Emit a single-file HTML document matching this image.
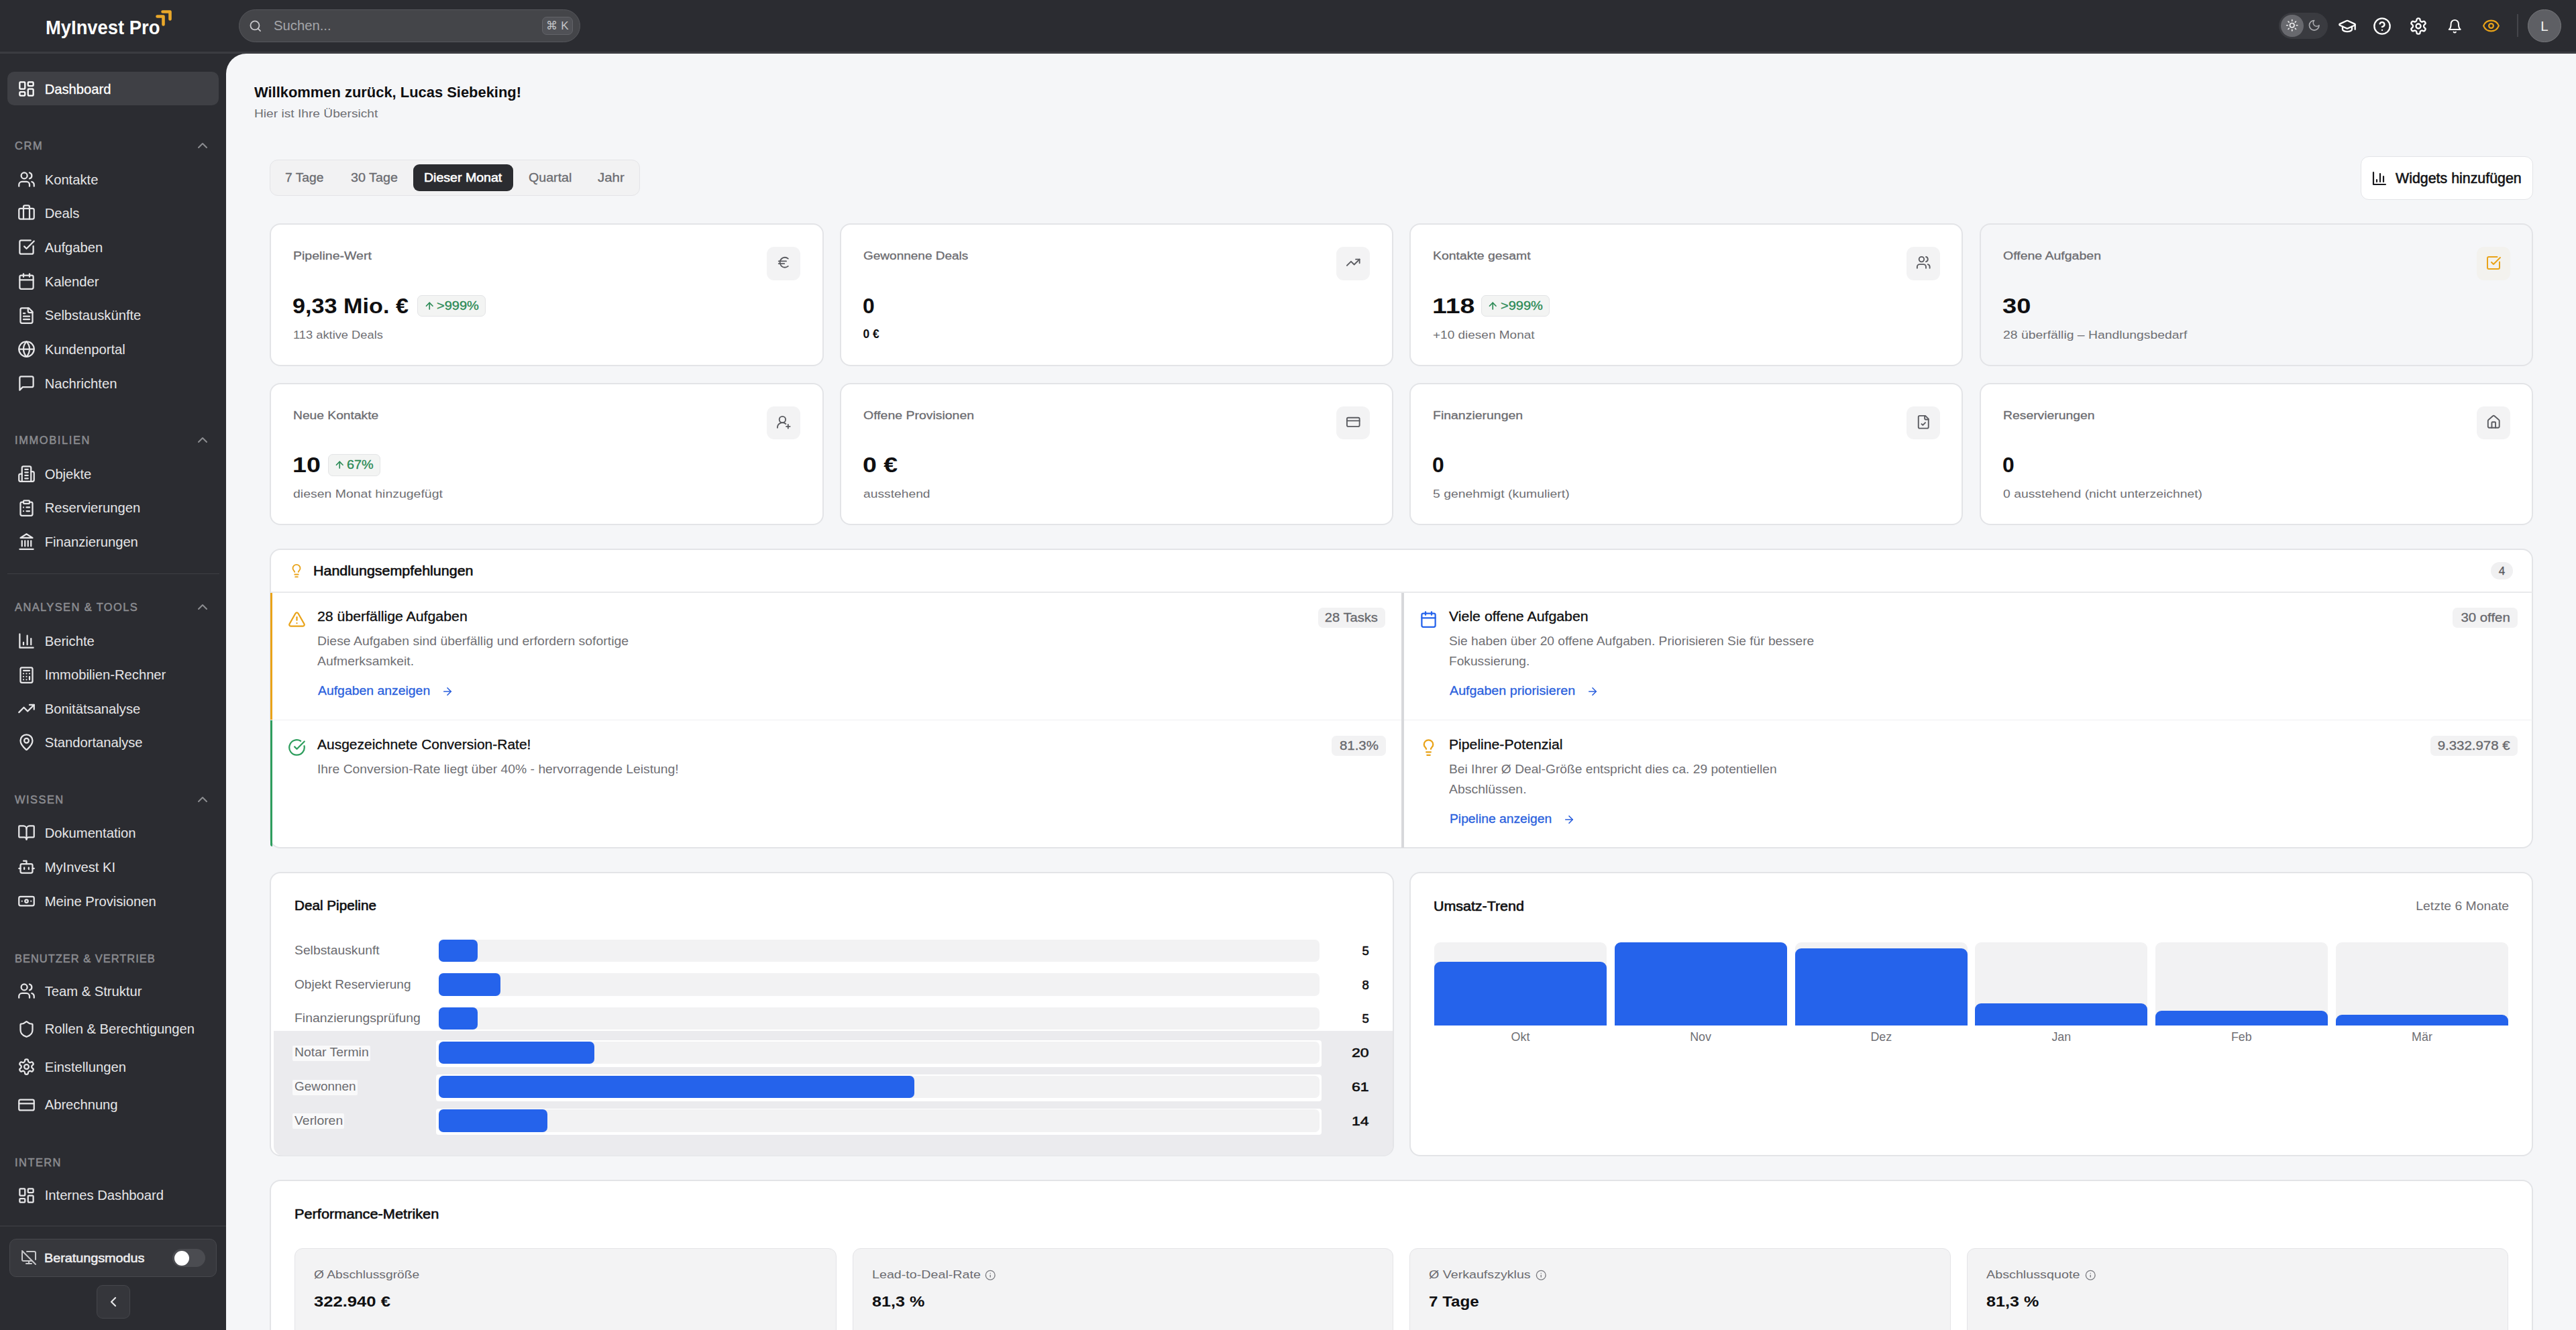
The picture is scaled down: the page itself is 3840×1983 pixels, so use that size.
<!DOCTYPE html>
<html><head><meta charset="utf-8"><title>MyInvest Pro Dashboard</title>
<style>
html,body{margin:0;padding:0;width:3840px;height:1983px;overflow:hidden;background:#2b2c31;}
body{position:relative;font-family:"Liberation Sans",sans-serif;}
div{box-sizing:border-box;}
</style></head><body>
<div style="position:absolute;left:0.00px;top:0.00px;width:3840.00px;height:1983.00px;background:#2b2c31;border-radius:0px;"></div>
<div style="position:absolute;left:0.00px;top:77.00px;width:3840.00px;height:2.50px;background:#3b3c41;border-radius:0px;"></div>
<div style="position:absolute;left:337px;top:80px;width:3503px;height:1903px;background:#f5f6f8;border-top-left-radius:30px"></div>
<div style="position:absolute;left:68.40px;top:25.92px;font-size:29.86px;line-height:29.86px;font-weight:700;color:#ffffff;letter-spacing:0.000px;white-space:nowrap;transform:scaleX(0.9170);transform-origin:0 0;">MyInvest Pro</div>
<svg style="position:absolute;left:232px;top:15px" width="25" height="24" viewBox="0 0 25 24"><path d="M2.5 9.5 H11.5 V21.5" fill="none" stroke="#eaa82a" stroke-width="4.6" stroke-linecap="round" stroke-linejoin="round"/><path d="M10.5 2.5 H21.5 V13.5" fill="none" stroke="#eaa82a" stroke-width="4.6" stroke-linecap="round" stroke-linejoin="round"/></svg>
<div style="position:absolute;left:355.70px;top:13.60px;width:509.30px;height:49.30px;background:#444549;border:1.5px solid #56575c;border-radius:25px;"></div>
<svg style="position:absolute;left:371.25px;top:29.25px;" width="19.5" height="19.5" viewBox="0 0 24 24" fill="none" stroke="#c9c9cc" stroke-width="2.2" stroke-linecap="round" stroke-linejoin="round"><circle cx="11" cy="11" r="8"/><path d="m21 21-4.3-4.3"/></svg>
<div style="position:absolute;left:407.99px;top:29.13px;font-size:19.57px;line-height:19.57px;font-weight:400;color:#a4a5a9;letter-spacing:0.000px;white-space:nowrap;transform:scaleX(1.0359);transform-origin:0 0;">Suchen...</div>
<div style="position:absolute;left:808.00px;top:25.00px;width:46.00px;height:27.40px;background:#505156;border:1.5px solid #626368;border-radius:7px;"></div>
<div style="position:absolute;left:814.47px;top:29.61px;font-size:17px;line-height:17px;font-weight:400;color:#c4c5c8;letter-spacing:0.000px;white-space:nowrap;">⌘ K</div>
<div style="position:absolute;left:3397.30px;top:18.80px;width:72.40px;height:39.40px;background:#3a3b40;border-radius:20px;"></div>
<div style="position:absolute;left:3400.00px;top:21.70px;width:34.00px;height:33.60px;background:#68696e;border-radius:17px;"></div>
<svg style="position:absolute;left:3406.95px;top:28.05px;" width="19.5" height="19.5" viewBox="0 0 24 24" fill="none" stroke="#f0f0f2" stroke-width="2" stroke-linecap="round" stroke-linejoin="round"><circle cx="12" cy="12" r="4"/><path d="M12 2v2"/><path d="M12 20v2"/><path d="m4.93 4.93 1.41 1.41"/><path d="m17.66 17.66 1.41 1.41"/><path d="M2 12h2"/><path d="M20 12h2"/><path d="m6.34 17.66-1.41 1.41"/><path d="m19.07 4.93-1.41 1.41"/></svg>
<svg style="position:absolute;left:3439.95px;top:28.05px;" width="19.5" height="19.5" viewBox="0 0 24 24" fill="none" stroke="#a9aaae" stroke-width="2" stroke-linecap="round" stroke-linejoin="round"><path d="M12 3a6 6 0 0 0 9 9 9 9 0 1 1-9-9Z"/></svg>
<svg style="position:absolute;left:3484.70px;top:24.50px;" width="28" height="28" viewBox="0 0 24 24" fill="none" stroke="#ffffff" stroke-width="2" stroke-linecap="round" stroke-linejoin="round"><path d="M21.42 10.922a1 1 0 0 0-.019-1.838L12.83 5.18a2 2 0 0 0-1.66 0L2.6 9.08a1 1 0 0 0 0 1.832l8.57 3.908a2 2 0 0 0 1.66 0z"/><path d="M22 10v6"/><path d="M6 12.5V16a6 3 0 0 0 12 0v-3.5"/></svg>
<svg style="position:absolute;left:3537.40px;top:24.50px;" width="28" height="28" viewBox="0 0 24 24" fill="none" stroke="#ffffff" stroke-width="2" stroke-linecap="round" stroke-linejoin="round"><circle cx="12" cy="12" r="10"/><path d="M9.09 9a3 3 0 0 1 5.83 1c0 2-3 3-3 3"/><path d="M12 17h.01"/></svg>
<svg style="position:absolute;left:3591.30px;top:24.50px;" width="28" height="28" viewBox="0 0 24 24" fill="none" stroke="#ffffff" stroke-width="2" stroke-linecap="round" stroke-linejoin="round"><path d="M12.22 2h-.44a2 2 0 0 0-2 2v.18a2 2 0 0 1-1 1.73l-.43.25a2 2 0 0 1-2 0l-.15-.08a2 2 0 0 0-2.73.73l-.22.38a2 2 0 0 0 .73 2.73l.15.1a2 2 0 0 1 1 1.72v.51a2 2 0 0 1-1 1.74l-.15.09a2 2 0 0 0-.73 2.73l.22.38a2 2 0 0 0 2.73.73l.15-.08a2 2 0 0 1 2 0l.43.25a2 2 0 0 1 1 1.73V20a2 2 0 0 0 2 2h.44a2 2 0 0 0 2-2v-.18a2 2 0 0 1 1-1.73l.43-.25a2 2 0 0 1 2 0l.15.08a2 2 0 0 0 2.73-.73l.22-.39a2 2 0 0 0-.73-2.73l-.15-.08a2 2 0 0 1-1-1.74v-.5a2 2 0 0 1 1-1.74l.15-.09a2 2 0 0 0 .73-2.73l-.22-.38a2 2 0 0 0-2.73-.73l-.15.08a2 2 0 0 1-2 0l-.43-.25a2 2 0 0 1-1-1.73V4a2 2 0 0 0-2-2z"/><circle cx="12" cy="12" r="3"/></svg>
<svg style="position:absolute;left:3647.75px;top:27.75px;" width="22.5" height="22.5" viewBox="0 0 24 24" fill="none" stroke="#ffffff" stroke-width="2.1" stroke-linecap="round" stroke-linejoin="round"><path d="M6 8a6 6 0 0 1 12 0c0 7 3 9 3 9H3s3-2 3-9"/><path d="M10.3 21a1.94 1.94 0 0 0 3.4 0"/></svg>
<svg style="position:absolute;left:3699.50px;top:25.00px;" width="27" height="27" viewBox="0 0 24 24" fill="none" stroke="#e9a319" stroke-width="2" stroke-linecap="round" stroke-linejoin="round"><path d="M2.062 12.348a1 1 0 0 1 0-.696 10.75 10.75 0 0 1 19.876 0 1 1 0 0 1 0 .696 10.75 10.75 0 0 1-19.876 0"/><circle cx="12" cy="12" r="3"/></svg>
<div style="position:absolute;left:3752.00px;top:21.40px;width:1.50px;height:33.90px;background:#45464b;border-radius:0px;"></div>
<div style="position:absolute;left:3768.00px;top:13.60px;width:50.00px;height:49.40px;background:#5e5f64;border:1.5px solid #77787c;border-radius:25px;"></div>
<div style="position:absolute;left:3787.28px;top:29.09px;font-size:20.57px;line-height:20.57px;font-weight:400;color:#f2f2f3;letter-spacing:0.000px;white-space:nowrap;">L</div>
<div style="position:absolute;left:11.00px;top:107.00px;width:315.00px;height:50.00px;background:#3f4045;border-radius:10px;"></div>
<svg style="position:absolute;left:25.50px;top:118.90px;" width="27" height="27" viewBox="0 0 24 24" fill="none" stroke="#ffffff" stroke-width="2" stroke-linecap="round" stroke-linejoin="round"><rect width="7" height="9" x="3" y="3" rx="1"/><rect width="7" height="5" x="14" y="3" rx="1"/><rect width="7" height="9" x="14" y="12" rx="1"/><rect width="7" height="5" x="3" y="16" rx="1"/></svg>
<div style="position:absolute;left:66.69px;top:122.69px;font-size:20.21px;line-height:20.21px;font-weight:400;color:#ffffff;letter-spacing:0.000px;white-space:nowrap;-webkit-text-stroke:0.3px #ffffff;">Dashboard</div>
<div style="position:absolute;left:22.04px;top:209.19px;font-size:16.43px;line-height:16.43px;font-weight:400;color:#8c8d91;letter-spacing:1.626px;white-space:nowrap;-webkit-text-stroke:0.5px #8c8d91;">CRM</div>
<svg style="position:absolute;left:289.50px;top:205.00px;" width="24" height="24" viewBox="0 0 24 24" fill="none" stroke="#8c8d91" stroke-width="2" stroke-linecap="round" stroke-linejoin="round"><path d="m18 15-6-6-6 6"/></svg>
<svg style="position:absolute;left:25.50px;top:253.75px;" width="27" height="27" viewBox="0 0 24 24" fill="none" stroke="#e6e6e8" stroke-width="2" stroke-linecap="round" stroke-linejoin="round"><path d="M16 21v-2a4 4 0 0 0-4-4H6a4 4 0 0 0-4 4v2"/><circle cx="9" cy="7" r="4"/><path d="M22 21v-2a4 4 0 0 0-3-3.87"/><path d="M16 3.13a4 4 0 0 1 0 7.75"/></svg>
<div style="position:absolute;left:66.69px;top:257.54px;font-size:20.21px;line-height:20.21px;font-weight:400;color:#e6e6e8;letter-spacing:0.000px;white-space:nowrap;">Kontakte</div>
<svg style="position:absolute;left:25.50px;top:304.47px;" width="27" height="27" viewBox="0 0 24 24" fill="none" stroke="#e6e6e8" stroke-width="2" stroke-linecap="round" stroke-linejoin="round"><path d="M16 20V4a2 2 0 0 0-2-2h-4a2 2 0 0 0-2 2v16"/><rect width="20" height="14" x="2" y="6" rx="2"/></svg>
<div style="position:absolute;left:66.69px;top:308.26px;font-size:20.21px;line-height:20.21px;font-weight:400;color:#e6e6e8;letter-spacing:0.000px;white-space:nowrap;">Deals</div>
<svg style="position:absolute;left:25.50px;top:355.19px;" width="27" height="27" viewBox="0 0 24 24" fill="none" stroke="#e6e6e8" stroke-width="2" stroke-linecap="round" stroke-linejoin="round"><path d="M21 10.5V19a2 2 0 0 1-2 2H5a2 2 0 0 1-2-2V5a2 2 0 0 1 2-2h12.5"/><path d="m9 11 3 3L22 4"/></svg>
<div style="position:absolute;left:66.69px;top:358.98px;font-size:20.21px;line-height:20.21px;font-weight:400;color:#e6e6e8;letter-spacing:0.000px;white-space:nowrap;">Aufgaben</div>
<svg style="position:absolute;left:25.50px;top:405.91px;" width="27" height="27" viewBox="0 0 24 24" fill="none" stroke="#e6e6e8" stroke-width="2" stroke-linecap="round" stroke-linejoin="round"><path d="M8 2v4"/><path d="M16 2v4"/><rect width="18" height="18" x="3" y="4" rx="2"/><path d="M3 10h18"/></svg>
<div style="position:absolute;left:66.69px;top:409.70px;font-size:20.21px;line-height:20.21px;font-weight:400;color:#e6e6e8;letter-spacing:0.000px;white-space:nowrap;">Kalender</div>
<svg style="position:absolute;left:25.50px;top:456.63px;" width="27" height="27" viewBox="0 0 24 24" fill="none" stroke="#e6e6e8" stroke-width="2" stroke-linecap="round" stroke-linejoin="round"><path d="M15 2H6a2 2 0 0 0-2 2v16a2 2 0 0 0 2 2h12a2 2 0 0 0 2-2V7Z"/><path d="M14 2v4a2 2 0 0 0 2 2h4"/><path d="M10 9H8"/><path d="M16 13H8"/><path d="M16 17H8"/></svg>
<div style="position:absolute;left:66.69px;top:460.42px;font-size:20.21px;line-height:20.21px;font-weight:400;color:#e6e6e8;letter-spacing:0.000px;white-space:nowrap;">Selbstauskünfte</div>
<svg style="position:absolute;left:25.50px;top:507.35px;" width="27" height="27" viewBox="0 0 24 24" fill="none" stroke="#e6e6e8" stroke-width="2" stroke-linecap="round" stroke-linejoin="round"><circle cx="12" cy="12" r="10"/><path d="M12 2a14.5 14.5 0 0 0 0 20 14.5 14.5 0 0 0 0-20"/><path d="M2 12h20"/></svg>
<div style="position:absolute;left:66.69px;top:511.14px;font-size:20.21px;line-height:20.21px;font-weight:400;color:#e6e6e8;letter-spacing:0.000px;white-space:nowrap;">Kundenportal</div>
<svg style="position:absolute;left:25.50px;top:558.07px;" width="27" height="27" viewBox="0 0 24 24" fill="none" stroke="#e6e6e8" stroke-width="2" stroke-linecap="round" stroke-linejoin="round"><path d="M21 15a2 2 0 0 1-2 2H7l-4 4V5a2 2 0 0 1 2-2h14a2 2 0 0 1 2 2z"/></svg>
<div style="position:absolute;left:66.69px;top:561.86px;font-size:20.21px;line-height:20.21px;font-weight:400;color:#e6e6e8;letter-spacing:0.000px;white-space:nowrap;">Nachrichten</div>
<div style="position:absolute;left:22.04px;top:648.09px;font-size:16.43px;line-height:16.43px;font-weight:400;color:#8c8d91;letter-spacing:1.637px;white-space:nowrap;-webkit-text-stroke:0.5px #8c8d91;">IMMOBILIEN</div>
<svg style="position:absolute;left:289.50px;top:643.90px;" width="24" height="24" viewBox="0 0 24 24" fill="none" stroke="#8c8d91" stroke-width="2" stroke-linecap="round" stroke-linejoin="round"><path d="m18 15-6-6-6 6"/></svg>
<svg style="position:absolute;left:25.50px;top:692.90px;" width="27" height="27" viewBox="0 0 24 24" fill="none" stroke="#e6e6e8" stroke-width="2" stroke-linecap="round" stroke-linejoin="round"><path d="M6 22V4a2 2 0 0 1 2-2h8a2 2 0 0 1 2 2v18Z"/><path d="M6 12H4a2 2 0 0 0-2 2v6a2 2 0 0 0 2 2h2"/><path d="M18 9h2a2 2 0 0 1 2 2v9a2 2 0 0 1-2 2h-2"/><path d="M10 6h4"/><path d="M10 10h4"/><path d="M10 14h4"/><path d="M10 18h4"/></svg>
<div style="position:absolute;left:66.69px;top:696.69px;font-size:20.21px;line-height:20.21px;font-weight:400;color:#e6e6e8;letter-spacing:0.000px;white-space:nowrap;">Objekte</div>
<svg style="position:absolute;left:25.50px;top:743.50px;" width="27" height="27" viewBox="0 0 24 24" fill="none" stroke="#e6e6e8" stroke-width="2" stroke-linecap="round" stroke-linejoin="round"><rect width="8" height="4" x="8" y="2" rx="1" ry="1"/><path d="M16 4h2a2 2 0 0 1 2 2v14a2 2 0 0 1-2 2H6a2 2 0 0 1-2-2V6a2 2 0 0 1 2-2h2"/><path d="M12 11h4"/><path d="M12 16h4"/><path d="M8 11h.01"/><path d="M8 16h.01"/></svg>
<div style="position:absolute;left:66.69px;top:747.29px;font-size:20.21px;line-height:20.21px;font-weight:400;color:#e6e6e8;letter-spacing:0.000px;white-space:nowrap;">Reservierungen</div>
<svg style="position:absolute;left:25.50px;top:794.10px;" width="27" height="27" viewBox="0 0 24 24" fill="none" stroke="#e6e6e8" stroke-width="2" stroke-linecap="round" stroke-linejoin="round"><line x1="3" x2="21" y1="22" y2="22"/><line x1="6" x2="6" y1="18" y2="11"/><line x1="10" x2="10" y1="18" y2="11"/><line x1="14" x2="14" y1="18" y2="11"/><line x1="18" x2="18" y1="18" y2="11"/><polygon points="12 2 20 7 4 7"/></svg>
<div style="position:absolute;left:66.69px;top:797.89px;font-size:20.21px;line-height:20.21px;font-weight:400;color:#e6e6e8;letter-spacing:0.000px;white-space:nowrap;">Finanzierungen</div>
<div style="position:absolute;left:11.00px;top:854.50px;width:315.50px;height:1.50px;background:#3e3f44;border-radius:0px;"></div>
<div style="position:absolute;left:22.04px;top:897.19px;font-size:16.43px;line-height:16.43px;font-weight:400;color:#8c8d91;letter-spacing:1.407px;white-space:nowrap;-webkit-text-stroke:0.5px #8c8d91;">ANALYSEN &amp; TOOLS</div>
<svg style="position:absolute;left:289.50px;top:893.00px;" width="24" height="24" viewBox="0 0 24 24" fill="none" stroke="#8c8d91" stroke-width="2" stroke-linecap="round" stroke-linejoin="round"><path d="m18 15-6-6-6 6"/></svg>
<svg style="position:absolute;left:25.50px;top:942.10px;" width="27" height="27" viewBox="0 0 24 24" fill="none" stroke="#e6e6e8" stroke-width="2" stroke-linecap="round" stroke-linejoin="round"><path d="M3 3v18h18"/><path d="M18 17V9"/><path d="M13 17V5"/><path d="M8 17v-3"/></svg>
<div style="position:absolute;left:66.69px;top:945.89px;font-size:20.21px;line-height:20.21px;font-weight:400;color:#e6e6e8;letter-spacing:0.000px;white-space:nowrap;">Berichte</div>
<svg style="position:absolute;left:25.50px;top:992.50px;" width="27" height="27" viewBox="0 0 24 24" fill="none" stroke="#e6e6e8" stroke-width="2" stroke-linecap="round" stroke-linejoin="round"><rect width="16" height="20" x="4" y="2" rx="2"/><line x1="8" x2="16" y1="6" y2="6"/><line x1="16" x2="16" y1="14" y2="18"/><path d="M16 10h.01"/><path d="M12 10h.01"/><path d="M8 10h.01"/><path d="M12 14h.01"/><path d="M8 14h.01"/><path d="M12 18h.01"/><path d="M8 18h.01"/></svg>
<div style="position:absolute;left:66.69px;top:996.29px;font-size:20.21px;line-height:20.21px;font-weight:400;color:#e6e6e8;letter-spacing:0.000px;white-space:nowrap;">Immobilien-Rechner</div>
<svg style="position:absolute;left:25.50px;top:1042.90px;" width="27" height="27" viewBox="0 0 24 24" fill="none" stroke="#e6e6e8" stroke-width="2" stroke-linecap="round" stroke-linejoin="round"><polyline points="22 7 13.5 15.5 8.5 10.5 2 17"/><polyline points="16 7 22 7 22 13"/></svg>
<div style="position:absolute;left:66.69px;top:1046.69px;font-size:20.21px;line-height:20.21px;font-weight:400;color:#e6e6e8;letter-spacing:0.000px;white-space:nowrap;">Bonitätsanalyse</div>
<svg style="position:absolute;left:25.50px;top:1093.30px;" width="27" height="27" viewBox="0 0 24 24" fill="none" stroke="#e6e6e8" stroke-width="2" stroke-linecap="round" stroke-linejoin="round"><path d="M20 10c0 4.993-5.539 10.193-7.399 11.799a1 1 0 0 1-1.202 0C9.539 20.193 4 14.993 4 10a8 8 0 0 1 16 0"/><circle cx="12" cy="10" r="3"/></svg>
<div style="position:absolute;left:66.69px;top:1097.09px;font-size:20.21px;line-height:20.21px;font-weight:400;color:#e6e6e8;letter-spacing:0.000px;white-space:nowrap;">Standortanalyse</div>
<div style="position:absolute;left:22.04px;top:1184.09px;font-size:16.43px;line-height:16.43px;font-weight:400;color:#8c8d91;letter-spacing:1.474px;white-space:nowrap;-webkit-text-stroke:0.5px #8c8d91;">WISSEN</div>
<svg style="position:absolute;left:289.50px;top:1179.90px;" width="24" height="24" viewBox="0 0 24 24" fill="none" stroke="#8c8d91" stroke-width="2" stroke-linecap="round" stroke-linejoin="round"><path d="m18 15-6-6-6 6"/></svg>
<svg style="position:absolute;left:25.50px;top:1228.10px;" width="27" height="27" viewBox="0 0 24 24" fill="none" stroke="#e6e6e8" stroke-width="2" stroke-linecap="round" stroke-linejoin="round"><path d="M12 7v14"/><path d="M3 18a1 1 0 0 1-1-1V4a1 1 0 0 1 1-1h5a4 4 0 0 1 4 4 4 4 0 0 1 4-4h5a1 1 0 0 1 1 1v13a1 1 0 0 1-1 1h-6a3 3 0 0 0-3 3 3 3 0 0 0-3-3z"/></svg>
<div style="position:absolute;left:66.69px;top:1231.89px;font-size:20.21px;line-height:20.21px;font-weight:400;color:#e6e6e8;letter-spacing:0.000px;white-space:nowrap;">Dokumentation</div>
<svg style="position:absolute;left:25.50px;top:1279.00px;" width="27" height="27" viewBox="0 0 24 24" fill="none" stroke="#e6e6e8" stroke-width="2" stroke-linecap="round" stroke-linejoin="round"><path d="M12 8V4H8"/><rect width="16" height="12" x="4" y="8" rx="2"/><path d="M2 14h2"/><path d="M20 14h2"/><path d="M15 13v2"/><path d="M9 13v2"/></svg>
<div style="position:absolute;left:66.69px;top:1282.79px;font-size:20.21px;line-height:20.21px;font-weight:400;color:#e6e6e8;letter-spacing:0.000px;white-space:nowrap;">MyInvest KI</div>
<svg style="position:absolute;left:25.50px;top:1329.90px;" width="27" height="27" viewBox="0 0 24 24" fill="none" stroke="#e6e6e8" stroke-width="2" stroke-linecap="round" stroke-linejoin="round"><rect width="20" height="12" x="2" y="6" rx="2"/><circle cx="12" cy="12" r="2"/><path d="M6 12h.01M18 12h.01"/></svg>
<div style="position:absolute;left:66.69px;top:1333.69px;font-size:20.21px;line-height:20.21px;font-weight:400;color:#e6e6e8;letter-spacing:0.000px;white-space:nowrap;">Meine Provisionen</div>
<div style="position:absolute;left:22.04px;top:1420.69px;font-size:16.43px;line-height:16.43px;font-weight:400;color:#8c8d91;letter-spacing:1.014px;white-space:nowrap;-webkit-text-stroke:0.5px #8c8d91;">BENUTZER &amp; VERTRIEB</div>
<svg style="position:absolute;left:25.50px;top:1464.10px;" width="27" height="27" viewBox="0 0 24 24" fill="none" stroke="#e6e6e8" stroke-width="2" stroke-linecap="round" stroke-linejoin="round"><path d="M16 21v-2a4 4 0 0 0-4-4H6a4 4 0 0 0-4 4v2"/><circle cx="9" cy="7" r="4"/><path d="M22 21v-2a4 4 0 0 0-3-3.87"/><path d="M16 3.13a4 4 0 0 1 0 7.75"/></svg>
<div style="position:absolute;left:66.69px;top:1467.89px;font-size:20.21px;line-height:20.21px;font-weight:400;color:#e6e6e8;letter-spacing:0.000px;white-space:nowrap;">Team &amp; Struktur</div>
<svg style="position:absolute;left:25.50px;top:1520.57px;" width="27" height="27" viewBox="0 0 24 24" fill="none" stroke="#e6e6e8" stroke-width="2" stroke-linecap="round" stroke-linejoin="round"><path d="M20 13c0 5-3.5 7.5-7.66 8.95a1 1 0 0 1-.67-.01C7.5 20.5 4 18 4 13V6a1 1 0 0 1 1-1c2 0 4.5-1.2 6.24-2.72a1.17 1.17 0 0 1 1.52 0C14.51 3.81 17 5 19 5a1 1 0 0 1 1 1z"/></svg>
<div style="position:absolute;left:66.69px;top:1524.36px;font-size:20.21px;line-height:20.21px;font-weight:400;color:#e6e6e8;letter-spacing:0.000px;white-space:nowrap;">Rollen &amp; Berechtigungen</div>
<svg style="position:absolute;left:25.50px;top:1577.04px;" width="27" height="27" viewBox="0 0 24 24" fill="none" stroke="#e6e6e8" stroke-width="2" stroke-linecap="round" stroke-linejoin="round"><path d="M12.22 2h-.44a2 2 0 0 0-2 2v.18a2 2 0 0 1-1 1.73l-.43.25a2 2 0 0 1-2 0l-.15-.08a2 2 0 0 0-2.73.73l-.22.38a2 2 0 0 0 .73 2.73l.15.1a2 2 0 0 1 1 1.72v.51a2 2 0 0 1-1 1.74l-.15.09a2 2 0 0 0-.73 2.73l.22.38a2 2 0 0 0 2.73.73l.15-.08a2 2 0 0 1 2 0l.43.25a2 2 0 0 1 1 1.73V20a2 2 0 0 0 2 2h.44a2 2 0 0 0 2-2v-.18a2 2 0 0 1 1-1.73l.43-.25a2 2 0 0 1 2 0l.15.08a2 2 0 0 0 2.73-.73l.22-.39a2 2 0 0 0-.73-2.73l-.15-.08a2 2 0 0 1-1-1.74v-.5a2 2 0 0 1 1-1.74l.15-.09a2 2 0 0 0 .73-2.73l-.22-.38a2 2 0 0 0-2.73-.73l-.15.08a2 2 0 0 1-2 0l-.43-.25a2 2 0 0 1-1-1.73V4a2 2 0 0 0-2-2z"/><circle cx="12" cy="12" r="3"/></svg>
<div style="position:absolute;left:66.69px;top:1580.83px;font-size:20.21px;line-height:20.21px;font-weight:400;color:#e6e6e8;letter-spacing:0.000px;white-space:nowrap;">Einstellungen</div>
<svg style="position:absolute;left:25.50px;top:1633.51px;" width="27" height="27" viewBox="0 0 24 24" fill="none" stroke="#e6e6e8" stroke-width="2" stroke-linecap="round" stroke-linejoin="round"><rect width="20" height="14" x="2" y="5" rx="2"/><line x1="2" x2="22" y1="10" y2="10"/></svg>
<div style="position:absolute;left:66.69px;top:1637.30px;font-size:20.21px;line-height:20.21px;font-weight:400;color:#e6e6e8;letter-spacing:0.000px;white-space:nowrap;">Abrechnung</div>
<div style="position:absolute;left:22.04px;top:1724.69px;font-size:16.43px;line-height:16.43px;font-weight:400;color:#8c8d91;letter-spacing:1.465px;white-space:nowrap;-webkit-text-stroke:0.5px #8c8d91;">INTERN</div>
<svg style="position:absolute;left:25.50px;top:1768.50px;" width="27" height="27" viewBox="0 0 24 24" fill="none" stroke="#e6e6e8" stroke-width="2" stroke-linecap="round" stroke-linejoin="round"><rect width="7" height="9" x="3" y="3" rx="1"/><rect width="7" height="5" x="14" y="3" rx="1"/><rect width="7" height="9" x="14" y="12" rx="1"/><rect width="7" height="5" x="3" y="16" rx="1"/></svg>
<div style="position:absolute;left:66.69px;top:1772.29px;font-size:20.21px;line-height:20.21px;font-weight:400;color:#e6e6e8;letter-spacing:0.000px;white-space:nowrap;">Internes Dashboard</div>
<div style="position:absolute;left:0.00px;top:1827.00px;width:337.00px;height:1.50px;background:#37383d;border-radius:0px;"></div>
<div style="position:absolute;left:14.40px;top:1847.00px;width:309.00px;height:56.60px;background:#37383d;border:1.5px solid #47484d;border-radius:10px;"></div>
<svg style="position:absolute;left:31.30px;top:1863.00px;" width="24" height="24" viewBox="0 0 24 24" fill="none" stroke="#c8c8cb" stroke-width="2" stroke-linecap="round" stroke-linejoin="round"><path d="M17 17H4a2 2 0 0 1-2-2V5c0-1.5 1-2 1-2"/><path d="M22 15V5a2 2 0 0 0-2-2H9"/><path d="M8 21h8"/><path d="M12 17v4"/><path d="m2 2 20 20"/></svg>
<div style="position:absolute;left:65.81px;top:1865.50px;font-size:19.14px;line-height:19.14px;font-weight:400;color:#ececee;letter-spacing:0.000px;white-space:nowrap;transform:scaleX(1.0332);transform-origin:0 0;-webkit-text-stroke:0.6px #ececee;">Beratungsmodus</div>
<div style="position:absolute;left:257.00px;top:1862.00px;width:48.60px;height:26.50px;background:#4b4c51;border-radius:14px;"></div>
<div style="position:absolute;left:260px;top:1864.5px;width:22px;height:22px;border-radius:50%;background:#fff"></div>
<div style="position:absolute;left:143.70px;top:1916.00px;width:49.90px;height:50.00px;background:#35363b;border:1.5px solid #45464b;border-radius:9px;"></div>
<svg style="position:absolute;left:156.60px;top:1929.00px;" width="24" height="24" viewBox="0 0 24 24" fill="none" stroke="#e6e6e8" stroke-width="2.2" stroke-linecap="round" stroke-linejoin="round"><path d="m15 18-6-6 6-6"/></svg>
<div style="position:absolute;left:379.32px;top:125.65px;font-size:22.86px;line-height:22.86px;font-weight:700;color:#0f0f11;letter-spacing:0.000px;white-space:nowrap;transform:scaleX(0.9587);transform-origin:0 0;">Willkommen zurück, Lucas Siebeking!</div>
<div style="position:absolute;left:379.23px;top:161.77px;font-size:16.57px;line-height:16.57px;font-weight:400;color:#6f6f74;letter-spacing:0.000px;white-space:nowrap;transform:scaleX(1.1577);transform-origin:0 0;">Hier ist Ihre Übersicht</div>
<div style="position:absolute;left:401.70px;top:238.30px;width:552.30px;height:53.70px;background:#f2f2f3;border:1.5px solid #e4e4e7;border-radius:12px;"></div>
<div style="position:absolute;left:615.90px;top:244.80px;width:148.90px;height:40.60px;background:#2b2c30;border-radius:9px;"></div>
<div style="position:absolute;left:424.93px;top:255.70px;font-size:18.43px;line-height:18.43px;font-weight:400;color:#6a6b70;letter-spacing:0.000px;white-space:nowrap;transform:scaleX(1.0459);transform-origin:0 0;-webkit-text-stroke:0.3px #6a6b70;">7 Tage</div>
<div style="position:absolute;left:522.71px;top:255.70px;font-size:18.43px;line-height:18.43px;font-weight:400;color:#6a6b70;letter-spacing:0.000px;white-space:nowrap;transform:scaleX(1.0721);transform-origin:0 0;-webkit-text-stroke:0.3px #6a6b70;">30 Tage</div>
<div style="position:absolute;left:632.22px;top:255.70px;font-size:18.43px;line-height:18.43px;font-weight:400;color:#ffffff;letter-spacing:0.000px;white-space:nowrap;transform:scaleX(1.0604);transform-origin:0 0;-webkit-text-stroke:0.6px #ffffff;">Dieser Monat</div>
<div style="position:absolute;left:787.71px;top:255.70px;font-size:18.43px;line-height:18.43px;font-weight:400;color:#6a6b70;letter-spacing:0.000px;white-space:nowrap;transform:scaleX(1.0656);transform-origin:0 0;-webkit-text-stroke:0.3px #6a6b70;">Quartal</div>
<div style="position:absolute;left:890.88px;top:255.70px;font-size:18.43px;line-height:18.43px;font-weight:400;color:#6a6b70;letter-spacing:0.000px;white-space:nowrap;transform:scaleX(1.1087);transform-origin:0 0;-webkit-text-stroke:0.3px #6a6b70;">Jahr</div>
<div style="position:absolute;left:3519.00px;top:233.00px;width:257.00px;height:64.60px;background:#ffffff;border:1.5px solid #e3e4e7;border-radius:12px;"></div>
<svg style="position:absolute;left:3535.00px;top:253.50px;" width="24" height="24" viewBox="0 0 24 24" fill="none" stroke="#1a1a1d" stroke-width="2.2" stroke-linecap="round" stroke-linejoin="round"><path d="M3 3v18h18"/><path d="M18 17V9"/><path d="M13 17V5"/><path d="M8 17v-3"/></svg>
<div style="position:absolute;left:3570.54px;top:254.82px;font-size:21.71px;line-height:21.71px;font-weight:400;color:#141416;letter-spacing:0.000px;white-space:nowrap;transform:scaleX(0.9846);transform-origin:0 0;-webkit-text-stroke:0.6px #141416;">Widgets hinzufügen</div>
<div style="position:absolute;left:402.00px;top:333.00px;width:825.50px;height:213.00px;background:#ffffff;border:2px solid #e3e4e7;border-radius:16px;"></div>
<div style="position:absolute;left:436.52px;top:373.26px;font-size:17.29px;line-height:17.29px;font-weight:400;color:#6b6b70;letter-spacing:0.000px;white-space:nowrap;transform:scaleX(1.1302);transform-origin:0 0;-webkit-text-stroke:0.3px #6b6b70;">Pipeline-Wert</div>
<div style="position:absolute;left:1143.30px;top:368.00px;width:50.20px;height:49.60px;background:#f3f3f4;border-radius:11px;"></div>
<svg style="position:absolute;left:1157.15px;top:380.25px;" width="22.5" height="22.5" viewBox="0 0 24 24" fill="none" stroke="#5a5b60" stroke-width="2" stroke-linecap="round" stroke-linejoin="round"><path d="M4 10h12"/><path d="M4 14h9"/><path d="M19 6a7.7 7.7 0 0 0-5.2-2A7.9 7.9 0 0 0 6 12c0 4.4 3.5 8 7.8 8 2 0 3.8-.8 5.2-2"/></svg>
<div style="position:absolute;left:435.93px;top:440.83px;font-size:31.86px;line-height:31.86px;font-weight:700;color:#0f0f11;letter-spacing:0.000px;white-space:nowrap;transform:scaleX(1.0730);transform-origin:0 0;">9,33 Mio. €</div>
<div style="position:absolute;left:436.57px;top:490.69px;font-size:17.14px;line-height:17.14px;font-weight:400;color:#6f6f74;letter-spacing:0.000px;white-space:nowrap;transform:scaleX(1.0682);transform-origin:0 0;">113 aktive Deals</div>
<div style="position:absolute;left:1252.00px;top:333.00px;width:824.50px;height:213.00px;background:#ffffff;border:2px solid #e3e4e7;border-radius:16px;"></div>
<div style="position:absolute;left:1286.54px;top:373.26px;font-size:17.29px;line-height:17.29px;font-weight:400;color:#6b6b70;letter-spacing:0.000px;white-space:nowrap;transform:scaleX(1.0995);transform-origin:0 0;-webkit-text-stroke:0.3px #6b6b70;">Gewonnene Deals</div>
<div style="position:absolute;left:1992.30px;top:368.00px;width:50.20px;height:49.60px;background:#f3f3f4;border-radius:11px;"></div>
<svg style="position:absolute;left:2006.15px;top:380.25px;" width="22.5" height="22.5" viewBox="0 0 24 24" fill="none" stroke="#5a5b60" stroke-width="2" stroke-linecap="round" stroke-linejoin="round"><polyline points="22 7 13.5 15.5 8.5 10.5 2 17"/><polyline points="16 7 22 7 22 13"/></svg>
<div style="position:absolute;left:1286.03px;top:440.83px;font-size:31.86px;line-height:31.86px;font-weight:700;color:#0f0f11;letter-spacing:0.000px;white-space:nowrap;">0</div>
<div style="position:absolute;left:1286.60px;top:490.45px;font-size:17.43px;line-height:17.43px;font-weight:700;color:#0f0f11;letter-spacing:0.000px;white-space:nowrap;">0 €</div>
<div style="position:absolute;left:2101.00px;top:333.00px;width:825.00px;height:213.00px;background:#ffffff;border:2px solid #e3e4e7;border-radius:16px;"></div>
<div style="position:absolute;left:2135.52px;top:373.26px;font-size:17.29px;line-height:17.29px;font-weight:400;color:#6b6b70;letter-spacing:0.000px;white-space:nowrap;transform:scaleX(1.1224);transform-origin:0 0;-webkit-text-stroke:0.3px #6b6b70;">Kontakte gesamt</div>
<div style="position:absolute;left:2841.80px;top:368.00px;width:50.20px;height:49.60px;background:#f3f3f4;border-radius:11px;"></div>
<svg style="position:absolute;left:2855.65px;top:380.25px;" width="22.5" height="22.5" viewBox="0 0 24 24" fill="none" stroke="#5a5b60" stroke-width="2" stroke-linecap="round" stroke-linejoin="round"><path d="M16 21v-2a4 4 0 0 0-4-4H6a4 4 0 0 0-4 4v2"/><circle cx="9" cy="7" r="4"/><path d="M22 21v-2a4 4 0 0 0-3-3.87"/><path d="M16 3.13a4 4 0 0 1 0 7.75"/></svg>
<div style="position:absolute;left:2134.73px;top:440.83px;font-size:31.86px;line-height:31.86px;font-weight:700;color:#0f0f11;letter-spacing:0.000px;white-space:nowrap;transform:scaleX(1.2325);transform-origin:0 0;">118</div>
<div style="position:absolute;left:2135.54px;top:490.69px;font-size:17.14px;line-height:17.14px;font-weight:400;color:#6f6f74;letter-spacing:0.000px;white-space:nowrap;transform:scaleX(1.1091);transform-origin:0 0;">+10 diesen Monat</div>
<div style="position:absolute;left:2951.00px;top:333.00px;width:825.00px;height:213.00px;background:#f5f6f8;border:2px solid #e3e4e7;border-radius:16px;"></div>
<div style="position:absolute;left:2985.52px;top:373.26px;font-size:17.29px;line-height:17.29px;font-weight:400;color:#6b6b70;letter-spacing:0.000px;white-space:nowrap;transform:scaleX(1.1281);transform-origin:0 0;-webkit-text-stroke:0.3px #6b6b70;">Offene Aufgaben</div>
<div style="position:absolute;left:3691.80px;top:368.00px;width:50.20px;height:49.60px;background:#f3f2ee;border-radius:11px;"></div>
<svg style="position:absolute;left:3704.90px;top:379.50px;" width="24" height="24" viewBox="0 0 24 24" fill="none" stroke="#e9a319" stroke-width="2" stroke-linecap="round" stroke-linejoin="round"><path d="M21 10.5V19a2 2 0 0 1-2 2H5a2 2 0 0 1-2-2V5a2 2 0 0 1 2-2h12.5"/><path d="m9 11 3 3L22 4"/></svg>
<div style="position:absolute;left:2984.78px;top:440.83px;font-size:31.86px;line-height:31.86px;font-weight:700;color:#0f0f11;letter-spacing:0.000px;white-space:nowrap;transform:scaleX(1.1955);transform-origin:0 0;">30</div>
<div style="position:absolute;left:2985.53px;top:490.69px;font-size:17.14px;line-height:17.14px;font-weight:400;color:#6f6f74;letter-spacing:0.000px;white-space:nowrap;transform:scaleX(1.1301);transform-origin:0 0;">28 überfällig – Handlungsbedarf</div>
<div style="position:absolute;left:402.00px;top:570.50px;width:825.50px;height:212.00px;background:#ffffff;border:2px solid #e3e4e7;border-radius:16px;"></div>
<div style="position:absolute;left:436.53px;top:610.76px;font-size:17.29px;line-height:17.29px;font-weight:400;color:#6b6b70;letter-spacing:0.000px;white-space:nowrap;transform:scaleX(1.1130);transform-origin:0 0;-webkit-text-stroke:0.3px #6b6b70;">Neue Kontakte</div>
<div style="position:absolute;left:1143.30px;top:605.50px;width:50.20px;height:49.60px;background:#f3f3f4;border-radius:11px;"></div>
<svg style="position:absolute;left:1157.15px;top:617.75px;" width="22.5" height="22.5" viewBox="0 0 24 24" fill="none" stroke="#5a5b60" stroke-width="2" stroke-linecap="round" stroke-linejoin="round"><path d="M2 21a8 8 0 0 1 13.292-6"/><circle cx="10" cy="8" r="5"/><path d="M19 16v6"/><path d="M22 19h-6"/></svg>
<div style="position:absolute;left:435.80px;top:678.33px;font-size:31.86px;line-height:31.86px;font-weight:700;color:#0f0f11;letter-spacing:0.000px;white-space:nowrap;transform:scaleX(1.1805);transform-origin:0 0;">10</div>
<div style="position:absolute;left:436.52px;top:728.19px;font-size:17.14px;line-height:17.14px;font-weight:400;color:#6f6f74;letter-spacing:0.000px;white-space:nowrap;transform:scaleX(1.1363);transform-origin:0 0;">diesen Monat hinzugefügt</div>
<div style="position:absolute;left:1252.00px;top:570.50px;width:824.50px;height:212.00px;background:#ffffff;border:2px solid #e3e4e7;border-radius:16px;"></div>
<div style="position:absolute;left:1286.52px;top:610.76px;font-size:17.29px;line-height:17.29px;font-weight:400;color:#6b6b70;letter-spacing:0.000px;white-space:nowrap;transform:scaleX(1.1255);transform-origin:0 0;-webkit-text-stroke:0.3px #6b6b70;">Offene Provisionen</div>
<div style="position:absolute;left:1992.30px;top:605.50px;width:50.20px;height:49.60px;background:#f3f3f4;border-radius:11px;"></div>
<svg style="position:absolute;left:2006.15px;top:617.75px;" width="22.5" height="22.5" viewBox="0 0 24 24" fill="none" stroke="#5a5b60" stroke-width="2" stroke-linecap="round" stroke-linejoin="round"><rect width="20" height="14" x="2" y="5" rx="2"/><line x1="2" x2="22" y1="10" y2="10"/></svg>
<div style="position:absolute;left:1285.80px;top:678.33px;font-size:31.86px;line-height:31.86px;font-weight:700;color:#0f0f11;letter-spacing:0.000px;white-space:nowrap;transform:scaleX(1.1769);transform-origin:0 0;">0 €</div>
<div style="position:absolute;left:1286.53px;top:728.19px;font-size:17.14px;line-height:17.14px;font-weight:400;color:#6f6f74;letter-spacing:0.000px;white-space:nowrap;transform:scaleX(1.1242);transform-origin:0 0;">ausstehend</div>
<div style="position:absolute;left:2101.00px;top:570.50px;width:825.00px;height:212.00px;background:#ffffff;border:2px solid #e3e4e7;border-radius:16px;"></div>
<div style="position:absolute;left:2135.52px;top:610.76px;font-size:17.29px;line-height:17.29px;font-weight:400;color:#6b6b70;letter-spacing:0.000px;white-space:nowrap;transform:scaleX(1.1262);transform-origin:0 0;-webkit-text-stroke:0.3px #6b6b70;">Finanzierungen</div>
<div style="position:absolute;left:2841.80px;top:605.50px;width:50.20px;height:49.60px;background:#f3f3f4;border-radius:11px;"></div>
<svg style="position:absolute;left:2855.65px;top:617.75px;" width="22.5" height="22.5" viewBox="0 0 24 24" fill="none" stroke="#5a5b60" stroke-width="2" stroke-linecap="round" stroke-linejoin="round"><path d="M15 2H6a2 2 0 0 0-2 2v16a2 2 0 0 0 2 2h12a2 2 0 0 0 2-2V7Z"/><path d="M14 2v4a2 2 0 0 0 2 2h4"/><path d="m9 15 2 2 4-4"/></svg>
<div style="position:absolute;left:2135.03px;top:678.33px;font-size:31.86px;line-height:31.86px;font-weight:700;color:#0f0f11;letter-spacing:0.000px;white-space:nowrap;">0</div>
<div style="position:absolute;left:2135.52px;top:728.19px;font-size:17.14px;line-height:17.14px;font-weight:400;color:#6f6f74;letter-spacing:0.000px;white-space:nowrap;transform:scaleX(1.1321);transform-origin:0 0;">5 genehmigt (kumuliert)</div>
<div style="position:absolute;left:2951.00px;top:570.50px;width:825.00px;height:212.00px;background:#ffffff;border:2px solid #e3e4e7;border-radius:16px;"></div>
<div style="position:absolute;left:2985.53px;top:610.76px;font-size:17.29px;line-height:17.29px;font-weight:400;color:#6b6b70;letter-spacing:0.000px;white-space:nowrap;transform:scaleX(1.1193);transform-origin:0 0;-webkit-text-stroke:0.3px #6b6b70;">Reservierungen</div>
<div style="position:absolute;left:3691.80px;top:605.50px;width:50.20px;height:49.60px;background:#f3f3f4;border-radius:11px;"></div>
<svg style="position:absolute;left:3705.65px;top:617.75px;" width="22.5" height="22.5" viewBox="0 0 24 24" fill="none" stroke="#5a5b60" stroke-width="2" stroke-linecap="round" stroke-linejoin="round"><path d="M15 21v-8a1 1 0 0 0-1-1h-4a1 1 0 0 0-1 1v8"/><path d="M3 10a2 2 0 0 1 .709-1.528l7-5.999a2 2 0 0 1 2.582 0l7 5.999A2 2 0 0 1 21 10v9a2 2 0 0 1-2 2H5a2 2 0 0 1-2-2z"/></svg>
<div style="position:absolute;left:2985.03px;top:678.33px;font-size:31.86px;line-height:31.86px;font-weight:700;color:#0f0f11;letter-spacing:0.000px;white-space:nowrap;">0</div>
<div style="position:absolute;left:2985.52px;top:728.19px;font-size:17.14px;line-height:17.14px;font-weight:400;color:#6f6f74;letter-spacing:0.000px;white-space:nowrap;transform:scaleX(1.1306);transform-origin:0 0;">0 ausstehend (nicht unterzeichnet)</div>
<div style="position:absolute;left:622.40px;top:440.40px;width:102.00px;height:31.60px;background:#f3f4f3;border:1.5px solid #e3e4e6;border-radius:7px;"></div>
<svg style="position:absolute;left:631.65px;top:447.95px;" width="16.5" height="16.5" viewBox="0 0 24 24" fill="none" stroke="#2b8a55" stroke-width="2.4" stroke-linecap="round" stroke-linejoin="round"><path d="m5 12 7-7 7 7"/><path d="M12 19V5"/></svg>
<div style="position:absolute;left:651.20px;top:447.85px;font-size:17.43px;line-height:17.43px;font-weight:400;color:#2b8a55;letter-spacing:0.000px;white-space:nowrap;transform:scaleX(1.1493);transform-origin:0 0;-webkit-text-stroke:0.3px #2b8a55;">&gt;999%</div>
<div style="position:absolute;left:2208.00px;top:440.40px;width:102.00px;height:31.60px;background:#f3f4f3;border:1.5px solid #e3e4e6;border-radius:7px;"></div>
<svg style="position:absolute;left:2217.25px;top:447.95px;" width="16.5" height="16.5" viewBox="0 0 24 24" fill="none" stroke="#2b8a55" stroke-width="2.4" stroke-linecap="round" stroke-linejoin="round"><path d="m5 12 7-7 7 7"/><path d="M12 19V5"/></svg>
<div style="position:absolute;left:2236.80px;top:447.85px;font-size:17.43px;line-height:17.43px;font-weight:400;color:#2b8a55;letter-spacing:0.000px;white-space:nowrap;transform:scaleX(1.1493);transform-origin:0 0;-webkit-text-stroke:0.3px #2b8a55;">&gt;999%</div>
<div style="position:absolute;left:488.90px;top:677.30px;width:78.10px;height:32.50px;background:#f3f4f3;border:1.5px solid #e3e4e6;border-radius:7px;"></div>
<svg style="position:absolute;left:498.15px;top:685.30px;" width="16.5" height="16.5" viewBox="0 0 24 24" fill="none" stroke="#2b8a55" stroke-width="2.4" stroke-linecap="round" stroke-linejoin="round"><path d="m5 12 7-7 7 7"/><path d="M12 19V5"/></svg>
<div style="position:absolute;left:517.41px;top:685.20px;font-size:17.43px;line-height:17.43px;font-weight:400;color:#2b8a55;letter-spacing:0.000px;white-space:nowrap;transform:scaleX(1.1382);transform-origin:0 0;-webkit-text-stroke:0.3px #2b8a55;">67%</div>
<div style="position:absolute;left:402.00px;top:818.00px;width:3374.00px;height:446.50px;background:#ffffff;border:2px solid #e3e4e7;border-radius:16px;"></div>
<svg style="position:absolute;left:431.00px;top:839.50px;" width="22" height="22" viewBox="0 0 24 24" fill="none" stroke="#e9a319" stroke-width="2" stroke-linecap="round" stroke-linejoin="round"><path d="M15 14c.2-1 .7-1.7 1.5-2.5 1-.9 1.5-2.2 1.5-3.5A6 6 0 0 0 6 8c0 1 .2 2.2 1.5 3.5.7.7 1.3 1.5 1.5 2.5"/><path d="M9 18h6"/><path d="M10 22h4"/></svg>
<div style="position:absolute;left:467.14px;top:840.97px;font-size:20.0px;line-height:20.0px;font-weight:400;color:#0f0f11;letter-spacing:0.000px;white-space:nowrap;transform:scaleX(1.0724);transform-origin:0 0;-webkit-text-stroke:0.6px #0f0f11;">Handlungsempfehlungen</div>
<div style="position:absolute;left:3712.90px;top:838.00px;width:33.10px;height:25.60px;background:#f0f0f1;border-radius:13px;"></div>
<div style="position:absolute;left:3724.77px;top:842.61px;font-size:17.0px;line-height:17.0px;font-weight:400;color:#55565b;letter-spacing:0.000px;white-space:nowrap;-webkit-text-stroke:0.3px #55565b;">4</div>
<div style="position:absolute;left:403.50px;top:882.00px;width:3371.00px;height:1.50px;background:#e9eaec;border-radius:0px;"></div>
<div style="position:absolute;left:403.50px;top:1072.50px;width:3371.00px;height:1.50px;background:#eeeff1;border-radius:0px;"></div>
<div style="position:absolute;left:402.70px;top:883.50px;width:3.30px;height:189.00px;background:#e9a319;border-radius:0px;"></div>
<div style="position:absolute;left:402.7px;top:1074px;width:3.3px;height:188px;background:#2f9e5e;border-bottom-left-radius:14px"></div>
<div style="position:absolute;left:2089.20px;top:883.50px;width:3.50px;height:380.50px;background:#d7d8db;border-radius:0px;"></div>
<svg style="position:absolute;left:428.90px;top:909.50px;" width="27" height="27" viewBox="0 0 24 24" fill="none" stroke="#e9a319" stroke-width="2" stroke-linecap="round" stroke-linejoin="round"><path d="m21.73 18-8-14a2 2 0 0 0-3.48 0l-8 14A2 2 0 0 0 4 21h16a2 2 0 0 0 1.73-3"/><path d="M12 9v4"/><path d="M12 17h.01"/></svg>
<div style="position:absolute;left:473.05px;top:910.27px;font-size:19.29px;line-height:19.29px;font-weight:400;color:#0f0f11;letter-spacing:0.000px;white-space:nowrap;transform:scaleX(1.1041);transform-origin:0 0;-webkit-text-stroke:0.3px #0f0f11;">28 überfällige Aufgaben</div>
<div style="position:absolute;left:473.12px;top:947.04px;font-size:18.14px;line-height:18.14px;font-weight:400;color:#6f6f74;letter-spacing:0.000px;white-space:nowrap;transform:scaleX(1.0711);transform-origin:0 0;">Diese Aufgaben sind überfällig und erfordern sofortige</div>
<div style="position:absolute;left:473.13px;top:976.64px;font-size:18.14px;line-height:18.14px;font-weight:400;color:#6f6f74;letter-spacing:0.000px;white-space:nowrap;transform:scaleX(1.0674);transform-origin:0 0;">Aufmerksamkeit.</div>
<div style="position:absolute;left:474.42px;top:1020.66px;font-size:18.71px;line-height:18.71px;font-weight:400;color:#2a5fdd;letter-spacing:0.000px;white-space:nowrap;transform:scaleX(1.0379);transform-origin:0 0;-webkit-text-stroke:0.3px #2a5fdd;">Aufgaben anzeigen</div>
<svg style="position:absolute;left:658.40px;top:1021.50px;" width="18" height="18" viewBox="0 0 24 24" fill="none" stroke="#2a5fdd" stroke-width="2.2" stroke-linecap="round" stroke-linejoin="round"><path d="M5 12h14"/><path d="m12 5 7 7-7 7"/></svg>
<div style="position:absolute;left:1965.00px;top:906.20px;width:100.40px;height:29.50px;background:#f2f2f3;border-radius:7px;"></div>
<div style="position:absolute;left:1982.26px;top:911.72px;font-size:18.29px;line-height:18.29px;font-weight:400;color:#66676c;letter-spacing:0.000px;white-space:nowrap;transform:scaleX(1.1007);transform-origin:100% 0;-webkit-text-stroke:0.3px #66676c;">28 Tasks</div>
<svg style="position:absolute;left:428.90px;top:1100.50px;" width="27" height="27" viewBox="0 0 24 24" fill="none" stroke="#2f9e5e" stroke-width="2" stroke-linecap="round" stroke-linejoin="round"><path d="M21.801 10A10 10 0 1 1 17 3.335"/><path d="m9 11 3 3L22 4"/></svg>
<div style="position:absolute;left:473.06px;top:1101.27px;font-size:19.29px;line-height:19.29px;font-weight:400;color:#0f0f11;letter-spacing:0.000px;white-space:nowrap;transform:scaleX(1.0881);transform-origin:0 0;-webkit-text-stroke:0.3px #0f0f11;">Ausgezeichnete Conversion-Rate!</div>
<div style="position:absolute;left:473.13px;top:1138.04px;font-size:18.14px;line-height:18.14px;font-weight:400;color:#6f6f74;letter-spacing:0.000px;white-space:nowrap;transform:scaleX(1.0650);transform-origin:0 0;">Ihre Conversion-Rate liegt über 40% - hervorragende Leistung!</div>
<div style="position:absolute;left:1985.00px;top:1097.20px;width:80.50px;height:29.50px;background:#f2f2f3;border-radius:7px;"></div>
<div style="position:absolute;left:2002.68px;top:1102.72px;font-size:18.29px;line-height:18.29px;font-weight:400;color:#66676c;letter-spacing:0.000px;white-space:nowrap;transform:scaleX(1.1176);transform-origin:100% 0;-webkit-text-stroke:0.3px #66676c;">81.3%</div>
<svg style="position:absolute;left:2115.60px;top:909.50px;" width="27" height="27" viewBox="0 0 24 24" fill="none" stroke="#2563eb" stroke-width="2" stroke-linecap="round" stroke-linejoin="round"><path d="M8 2v4"/><path d="M16 2v4"/><rect width="18" height="18" x="3" y="4" rx="2"/><path d="M3 10h18"/></svg>
<div style="position:absolute;left:2159.65px;top:910.27px;font-size:19.29px;line-height:19.29px;font-weight:400;color:#0f0f11;letter-spacing:0.000px;white-space:nowrap;transform:scaleX(1.1044);transform-origin:0 0;-webkit-text-stroke:0.3px #0f0f11;">Viele offene Aufgaben</div>
<div style="position:absolute;left:2159.73px;top:947.04px;font-size:18.14px;line-height:18.14px;font-weight:400;color:#6f6f74;letter-spacing:0.000px;white-space:nowrap;transform:scaleX(1.0598);transform-origin:0 0;">Sie haben über 20 offene Aufgaben. Priorisieren Sie für bessere</div>
<div style="position:absolute;left:2159.73px;top:976.64px;font-size:18.14px;line-height:18.14px;font-weight:400;color:#6f6f74;letter-spacing:0.000px;white-space:nowrap;transform:scaleX(1.0571);transform-origin:0 0;">Fokussierung.</div>
<div style="position:absolute;left:2161.01px;top:1020.66px;font-size:18.71px;line-height:18.71px;font-weight:400;color:#2a5fdd;letter-spacing:0.000px;white-space:nowrap;transform:scaleX(1.0531);transform-origin:0 0;-webkit-text-stroke:0.3px #2a5fdd;">Aufgaben priorisieren</div>
<svg style="position:absolute;left:2364.90px;top:1021.50px;" width="18" height="18" viewBox="0 0 24 24" fill="none" stroke="#2a5fdd" stroke-width="2.2" stroke-linecap="round" stroke-linejoin="round"><path d="M5 12h14"/><path d="m12 5 7 7-7 7"/></svg>
<div style="position:absolute;left:3656.00px;top:906.20px;width:97.00px;height:29.50px;background:#f2f2f3;border-radius:7px;"></div>
<div style="position:absolute;left:3676.27px;top:911.72px;font-size:18.29px;line-height:18.29px;font-weight:400;color:#66676c;letter-spacing:0.000px;white-space:nowrap;transform:scaleX(1.1154);transform-origin:100% 0;-webkit-text-stroke:0.3px #66676c;">30 offen</div>
<svg style="position:absolute;left:2115.60px;top:1100.50px;" width="27" height="27" viewBox="0 0 24 24" fill="none" stroke="#e9a319" stroke-width="2" stroke-linecap="round" stroke-linejoin="round"><path d="M15 14c.2-1 .7-1.7 1.5-2.5 1-.9 1.5-2.2 1.5-3.5A6 6 0 0 0 6 8c0 1 .2 2.2 1.5 3.5.7.7 1.3 1.5 1.5 2.5"/><path d="M9 18h6"/><path d="M10 22h4"/></svg>
<div style="position:absolute;left:2159.65px;top:1101.27px;font-size:19.29px;line-height:19.29px;font-weight:400;color:#0f0f11;letter-spacing:0.000px;white-space:nowrap;transform:scaleX(1.0981);transform-origin:0 0;-webkit-text-stroke:0.3px #0f0f11;">Pipeline-Potenzial</div>
<div style="position:absolute;left:2159.73px;top:1138.04px;font-size:18.14px;line-height:18.14px;font-weight:400;color:#6f6f74;letter-spacing:0.000px;white-space:nowrap;transform:scaleX(1.0590);transform-origin:0 0;">Bei Ihrer Ø Deal-Größe entspricht dies ca. 29 potentiellen</div>
<div style="position:absolute;left:2159.72px;top:1167.64px;font-size:18.14px;line-height:18.14px;font-weight:400;color:#6f6f74;letter-spacing:0.000px;white-space:nowrap;transform:scaleX(1.0720);transform-origin:0 0;">Abschlüssen.</div>
<div style="position:absolute;left:2161.03px;top:1211.66px;font-size:18.71px;line-height:18.71px;font-weight:400;color:#2a5fdd;letter-spacing:0.000px;white-space:nowrap;transform:scaleX(1.0319);transform-origin:0 0;-webkit-text-stroke:0.3px #2a5fdd;">Pipeline anzeigen</div>
<svg style="position:absolute;left:2330.10px;top:1212.50px;" width="18" height="18" viewBox="0 0 24 24" fill="none" stroke="#2a5fdd" stroke-width="2.2" stroke-linecap="round" stroke-linejoin="round"><path d="M5 12h14"/><path d="m12 5 7 7-7 7"/></svg>
<div style="position:absolute;left:3623.00px;top:1097.20px;width:130.00px;height:29.50px;background:#f2f2f3;border-radius:7px;"></div>
<div style="position:absolute;left:3645.44px;top:1102.72px;font-size:18.29px;line-height:18.29px;font-weight:400;color:#66676c;letter-spacing:0.000px;white-space:nowrap;transform:scaleX(1.1176);transform-origin:100% 0;-webkit-text-stroke:0.3px #66676c;">9.332.978 €</div>
<div style="position:absolute;left:402.00px;top:1300.00px;width:1675.50px;height:424.00px;background:#ffffff;border:2px solid #e3e4e7;border-radius:16px;"></div>
<div style="position:absolute;left:408px;top:1537px;width:1668px;height:185.5px;background:#ebebee;border-bottom-left-radius:14px;border-bottom-right-radius:14px"></div>
<div style="position:absolute;left:438.67px;top:1341.15px;font-size:19.43px;line-height:19.43px;font-weight:400;color:#0f0f11;letter-spacing:0.000px;white-space:nowrap;transform:scaleX(1.0656);transform-origin:0 0;-webkit-text-stroke:0.6px #0f0f11;">Deal Pipeline</div>
<div style="position:absolute;left:438.73px;top:1408.78px;font-size:17.86px;line-height:17.86px;font-weight:400;color:#6b6b70;letter-spacing:0.000px;white-space:nowrap;transform:scaleX(1.0811);transform-origin:0 0;">Selbstauskunft</div>
<div style="position:absolute;left:654.00px;top:1400.50px;width:1313.30px;height:33.40px;background:#f2f2f3;border-radius:7px;"></div>
<div style="position:absolute;left:654.00px;top:1400.50px;width:57.60px;height:33.40px;background:#2563eb;border-radius:7px;"></div>
<div style="position:absolute;left:2030.49px;top:1408.90px;font-size:18.43px;line-height:18.43px;font-weight:400;color:#0f0f11;letter-spacing:0.000px;white-space:nowrap;-webkit-text-stroke:0.6px #0f0f11;">5</div>
<div style="position:absolute;left:438.74px;top:1459.53px;font-size:17.86px;line-height:17.86px;font-weight:400;color:#6b6b70;letter-spacing:0.000px;white-space:nowrap;transform:scaleX(1.0660);transform-origin:0 0;">Objekt Reservierung</div>
<div style="position:absolute;left:654.00px;top:1451.25px;width:1313.30px;height:33.40px;background:#f2f2f3;border-radius:7px;"></div>
<div style="position:absolute;left:654.00px;top:1451.25px;width:91.90px;height:33.40px;background:#2563eb;border-radius:7px;"></div>
<div style="position:absolute;left:2030.49px;top:1459.65px;font-size:18.43px;line-height:18.43px;font-weight:400;color:#0f0f11;letter-spacing:0.000px;white-space:nowrap;-webkit-text-stroke:0.6px #0f0f11;">8</div>
<div style="position:absolute;left:438.72px;top:1510.28px;font-size:17.86px;line-height:17.86px;font-weight:400;color:#6b6b70;letter-spacing:0.000px;white-space:nowrap;transform:scaleX(1.0869);transform-origin:0 0;">Finanzierungsprüfung</div>
<div style="position:absolute;left:654.00px;top:1502.00px;width:1313.30px;height:33.40px;background:#f2f2f3;border-radius:7px;"></div>
<div style="position:absolute;left:654.00px;top:1502.00px;width:57.60px;height:33.40px;background:#2563eb;border-radius:7px;"></div>
<div style="position:absolute;left:2030.49px;top:1510.40px;font-size:18.43px;line-height:18.43px;font-weight:400;color:#0f0f11;letter-spacing:0.000px;white-space:nowrap;-webkit-text-stroke:0.6px #0f0f11;">5</div>
<div style="position:absolute;left:436.00px;top:1558.75px;width:116.20px;height:23.00px;background:#f9f9fa;border-radius:2px;"></div>
<div style="position:absolute;left:650.00px;top:1551.25px;width:1319.50px;height:39.50px;background:#ffffff;border-radius:4px;"></div>
<div style="position:absolute;left:438.72px;top:1561.03px;font-size:17.86px;line-height:17.86px;font-weight:400;color:#6b6b70;letter-spacing:0.000px;white-space:nowrap;transform:scaleX(1.0865);transform-origin:0 0;">Notar Termin</div>
<div style="position:absolute;left:654.00px;top:1552.75px;width:1313.30px;height:33.40px;background:#f2f2f3;border-radius:7px;"></div>
<div style="position:absolute;left:654.00px;top:1552.75px;width:231.90px;height:33.40px;background:#2563eb;border-radius:7px;"></div>
<div style="position:absolute;left:2020.43px;top:1561.15px;font-size:18.43px;line-height:18.43px;font-weight:400;color:#0f0f11;letter-spacing:0.000px;white-space:nowrap;transform:scaleX(1.2500);transform-origin:100% 0;-webkit-text-stroke:0.6px #0f0f11;">20</div>
<div style="position:absolute;left:436.00px;top:1609.50px;width:96.70px;height:23.00px;background:#f9f9fa;border-radius:2px;"></div>
<div style="position:absolute;left:650.00px;top:1602.00px;width:1319.50px;height:39.50px;background:#ffffff;border-radius:4px;"></div>
<div style="position:absolute;left:438.74px;top:1611.78px;font-size:17.86px;line-height:17.86px;font-weight:400;color:#6b6b70;letter-spacing:0.000px;white-space:nowrap;transform:scaleX(1.0595);transform-origin:0 0;">Gewonnen</div>
<div style="position:absolute;left:654.00px;top:1603.50px;width:1313.30px;height:33.40px;background:#f2f2f3;border-radius:7px;"></div>
<div style="position:absolute;left:654.00px;top:1603.50px;width:709.20px;height:33.40px;background:#2563eb;border-radius:7px;"></div>
<div style="position:absolute;left:2020.43px;top:1611.90px;font-size:18.43px;line-height:18.43px;font-weight:400;color:#0f0f11;letter-spacing:0.000px;white-space:nowrap;transform:scaleX(1.2500);transform-origin:100% 0;-webkit-text-stroke:0.6px #0f0f11;">61</div>
<div style="position:absolute;left:436.00px;top:1660.25px;width:77.30px;height:23.00px;background:#f9f9fa;border-radius:2px;"></div>
<div style="position:absolute;left:650.00px;top:1652.75px;width:1319.50px;height:39.50px;background:#ffffff;border-radius:4px;"></div>
<div style="position:absolute;left:438.73px;top:1662.53px;font-size:17.86px;line-height:17.86px;font-weight:400;color:#6b6b70;letter-spacing:0.000px;white-space:nowrap;transform:scaleX(1.0847);transform-origin:0 0;">Verloren</div>
<div style="position:absolute;left:654.00px;top:1654.25px;width:1313.30px;height:33.40px;background:#f2f2f3;border-radius:7px;"></div>
<div style="position:absolute;left:654.00px;top:1654.25px;width:162.20px;height:33.40px;background:#2563eb;border-radius:7px;"></div>
<div style="position:absolute;left:2020.43px;top:1662.65px;font-size:18.43px;line-height:18.43px;font-weight:400;color:#0f0f11;letter-spacing:0.000px;white-space:nowrap;transform:scaleX(1.2500);transform-origin:100% 0;-webkit-text-stroke:0.6px #0f0f11;">14</div>
<div style="position:absolute;left:2101.00px;top:1300.00px;width:1675.00px;height:424.00px;background:#ffffff;border:2px solid #e3e4e7;border-radius:16px;"></div>
<div style="position:absolute;left:2137.14px;top:1341.85px;font-size:19.43px;line-height:19.43px;font-weight:400;color:#0f0f11;letter-spacing:0.000px;white-space:nowrap;transform:scaleX(1.1021);transform-origin:0 0;-webkit-text-stroke:0.6px #0f0f11;">Umsatz-Trend</div>
<div style="position:absolute;left:3611.70px;top:1343.18px;font-size:17.86px;line-height:17.86px;font-weight:400;color:#6f6f74;letter-spacing:0.000px;white-space:nowrap;transform:scaleX(1.0834);transform-origin:100% 0;">Letzte 6 Monate</div>
<div style="position:absolute;left:2138.00px;top:1404.80px;width:257.00px;height:124.30px;background:#f2f2f3;border-radius:9px;"></div>
<div style="position:absolute;left:2138px;top:1434.2px;width:257px;height:94.89999999999986px;background:#2563eb;border-top-left-radius:9px;border-top-right-radius:9px"></div>
<div style="position:absolute;left:2252.61px;top:1537.68px;font-size:17.86px;line-height:17.86px;font-weight:400;color:#6f6f74;letter-spacing:0.000px;white-space:nowrap;">Okt</div>
<div style="position:absolute;left:2406.60px;top:1404.80px;width:257.00px;height:124.30px;background:#f2f2f3;border-radius:9px;"></div>
<div style="position:absolute;left:2406.6px;top:1404.8px;width:257px;height:124.29999999999995px;background:#2563eb;border-top-left-radius:9px;border-top-right-radius:9px"></div>
<div style="position:absolute;left:2519.22px;top:1537.68px;font-size:17.86px;line-height:17.86px;font-weight:400;color:#6f6f74;letter-spacing:0.000px;white-space:nowrap;">Nov</div>
<div style="position:absolute;left:2675.80px;top:1404.80px;width:257.00px;height:124.30px;background:#f2f2f3;border-radius:9px;"></div>
<div style="position:absolute;left:2675.8px;top:1413.7px;width:257px;height:115.39999999999986px;background:#2563eb;border-top-left-radius:9px;border-top-right-radius:9px"></div>
<div style="position:absolute;left:2788.42px;top:1537.68px;font-size:17.86px;line-height:17.86px;font-weight:400;color:#6f6f74;letter-spacing:0.000px;white-space:nowrap;">Dez</div>
<div style="position:absolute;left:2944.30px;top:1404.80px;width:257.00px;height:124.30px;background:#f2f2f3;border-radius:9px;"></div>
<div style="position:absolute;left:2944.3px;top:1496.3px;width:257px;height:32.799999999999955px;background:#2563eb;border-top-left-radius:9px;border-top-right-radius:9px"></div>
<div style="position:absolute;left:3058.40px;top:1537.68px;font-size:17.86px;line-height:17.86px;font-weight:400;color:#6f6f74;letter-spacing:0.000px;white-space:nowrap;">Jan</div>
<div style="position:absolute;left:3212.80px;top:1404.80px;width:257.00px;height:124.30px;background:#f2f2f3;border-radius:9px;"></div>
<div style="position:absolute;left:3212.8px;top:1507.3px;width:257px;height:21.799999999999955px;background:#2563eb;border-top-left-radius:9px;border-top-right-radius:9px"></div>
<div style="position:absolute;left:3325.91px;top:1537.68px;font-size:17.86px;line-height:17.86px;font-weight:400;color:#6f6f74;letter-spacing:0.000px;white-space:nowrap;">Feb</div>
<div style="position:absolute;left:3482.00px;top:1404.80px;width:257.00px;height:124.30px;background:#f2f2f3;border-radius:9px;"></div>
<div style="position:absolute;left:3482px;top:1512.7px;width:257px;height:16.399999999999864px;background:#2563eb;border-top-left-radius:9px;border-top-right-radius:9px"></div>
<div style="position:absolute;left:3595.12px;top:1537.68px;font-size:17.86px;line-height:17.86px;font-weight:400;color:#6f6f74;letter-spacing:0.000px;white-space:nowrap;">Mär</div>
<div style="position:absolute;left:402.00px;top:1759.00px;width:3374.00px;height:341.00px;background:#ffffff;border:2px solid #e3e4e7;border-radius:16px;"></div>
<div style="position:absolute;left:438.53px;top:1800.77px;font-size:19.29px;line-height:19.29px;font-weight:400;color:#0f0f11;letter-spacing:0.000px;white-space:nowrap;transform:scaleX(1.1289);transform-origin:0 0;-webkit-text-stroke:0.6px #0f0f11;">Performance-Metriken</div>
<div style="position:absolute;left:439.40px;top:1860.70px;width:807.30px;height:239.30px;background:#f3f3f4;border:1.5px solid #e4e4e7;border-radius:12px;"></div>
<div style="position:absolute;left:468.43px;top:1892.65px;font-size:16.71px;line-height:16.71px;font-weight:400;color:#6b6b70;letter-spacing:0.000px;white-space:nowrap;transform:scaleX(1.1536);transform-origin:0 0;">Ø Abschlussgröße</div>
<div style="position:absolute;left:468.38px;top:1930.38px;font-size:22.0px;line-height:22.0px;font-weight:700;color:#0f0f11;letter-spacing:0.000px;white-space:nowrap;transform:scaleX(1.1647);transform-origin:0 0;">322.940 €</div>
<div style="position:absolute;left:1270.60px;top:1860.70px;width:806.20px;height:239.30px;background:#f3f3f4;border:1.5px solid #e4e4e7;border-radius:12px;"></div>
<div style="position:absolute;left:1299.61px;top:1892.65px;font-size:16.71px;line-height:16.71px;font-weight:400;color:#6b6b70;letter-spacing:0.000px;white-space:nowrap;transform:scaleX(1.1792);transform-origin:0 0;">Lead-to-Deal-Rate</div>
<div style="position:absolute;left:1299.59px;top:1930.38px;font-size:22.0px;line-height:22.0px;font-weight:700;color:#0f0f11;letter-spacing:0.000px;white-space:nowrap;transform:scaleX(1.1426);transform-origin:0 0;">81,3 %</div>
<svg style="position:absolute;left:1468.25px;top:1893.25px;" width="16.5" height="16.5" viewBox="0 0 24 24" fill="none" stroke="#7a7b80" stroke-width="2" stroke-linecap="round" stroke-linejoin="round"><circle cx="12" cy="12" r="10"/><path d="M12 16v-4"/><path d="M12 8h.01"/></svg>
<div style="position:absolute;left:2100.50px;top:1860.70px;width:807.50px;height:239.30px;background:#f3f3f4;border:1.5px solid #e4e4e7;border-radius:12px;"></div>
<div style="position:absolute;left:2129.51px;top:1892.65px;font-size:16.71px;line-height:16.71px;font-weight:400;color:#6b6b70;letter-spacing:0.000px;white-space:nowrap;transform:scaleX(1.1766);transform-origin:0 0;">Ø Verkaufszyklus</div>
<div style="position:absolute;left:2129.53px;top:1930.38px;font-size:22.0px;line-height:22.0px;font-weight:700;color:#0f0f11;letter-spacing:0.000px;white-space:nowrap;transform:scaleX(1.0974);transform-origin:0 0;">7 Tage</div>
<svg style="position:absolute;left:2288.95px;top:1893.25px;" width="16.5" height="16.5" viewBox="0 0 24 24" fill="none" stroke="#7a7b80" stroke-width="2" stroke-linecap="round" stroke-linejoin="round"><circle cx="12" cy="12" r="10"/><path d="M12 16v-4"/><path d="M12 8h.01"/></svg>
<div style="position:absolute;left:2932.00px;top:1860.70px;width:807.00px;height:239.30px;background:#f3f3f4;border:1.5px solid #e4e4e7;border-radius:12px;"></div>
<div style="position:absolute;left:2961.01px;top:1892.65px;font-size:16.71px;line-height:16.71px;font-weight:400;color:#6b6b70;letter-spacing:0.000px;white-space:nowrap;transform:scaleX(1.1831);transform-origin:0 0;">Abschlussquote</div>
<div style="position:absolute;left:2960.99px;top:1930.38px;font-size:22.0px;line-height:22.0px;font-weight:700;color:#0f0f11;letter-spacing:0.000px;white-space:nowrap;transform:scaleX(1.1426);transform-origin:0 0;">81,3 %</div>
<svg style="position:absolute;left:3107.95px;top:1893.25px;" width="16.5" height="16.5" viewBox="0 0 24 24" fill="none" stroke="#7a7b80" stroke-width="2" stroke-linecap="round" stroke-linejoin="round"><circle cx="12" cy="12" r="10"/><path d="M12 16v-4"/><path d="M12 8h.01"/></svg>
<script>(function(){var k=window.innerWidth/3840;if(Math.abs(k-1)>0.001){document.documentElement.style.zoom=k;}})();</script>
</body></html>
